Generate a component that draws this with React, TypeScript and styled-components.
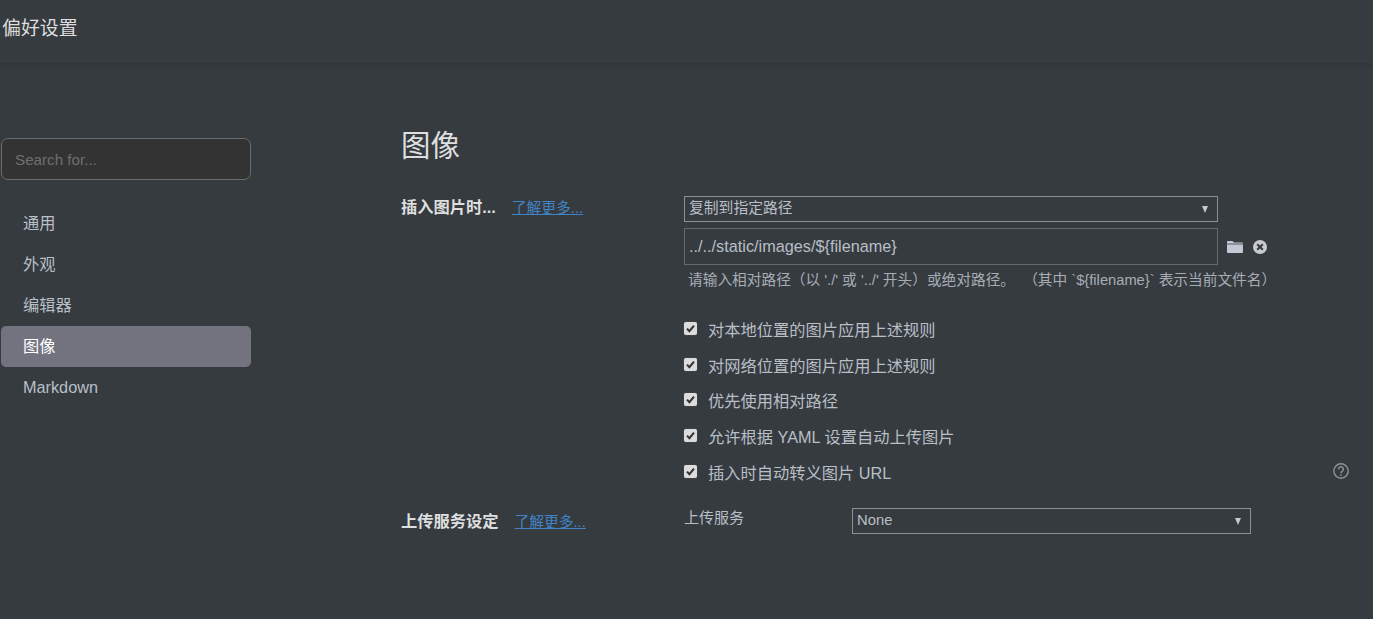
import React from "react";
import styled, { createGlobalStyle } from "styled-components";

const FONT = `"Liberation Sans", "Noto Sans CJK SC", sans-serif`;

const Global = createGlobalStyle`
  html, body { margin: 0; padding: 0; background: #363b40; overflow: hidden; }
  body { font-family: ${FONT}; color: #b8bfc6; }
  * { box-sizing: border-box; }
`;

const Page = styled.div`
  width: 1373px;
  height: 619px;
  background: #363b40;
  overflow: hidden;
`;

const Header = styled.header`
  height: 63px;
  padding: 19px 0 0 2px;
  box-shadow: 0 2px 5px rgba(0, 0, 0, 0.1);
`;

const Title = styled.h3`
  margin: 0;
  font-size: 18.9px;
  line-height: 20px;
  font-weight: 400;
  color: #dedede;
`;

const Body = styled.div`
  display: grid;
  grid-template-columns: 401px 1fr;
`;

const Sidebar = styled.aside`
  padding: 75px 0 0 1px;
  width: 251px;
`;

const Search = styled.input`
  display: block;
  width: 250px;
  height: 42px;
  padding: 0 13px;
  margin-bottom: 23px;
  background: #333333;
  border: 1px solid #6b6b6b;
  border-radius: 7px;
  font: 15.2px ${FONT};
  color: #b8bfc6;
  outline: none;
  &::placeholder { color: #6f6f6f; opacity: 1; }
`;

const NavItem = styled.div<{ $active?: boolean; $latin?: boolean }>`
  height: 41px;
  padding: 0 0 ${(p) => (p.$latin ? 0 : 3)}px 22px;
  display: flex;
  align-items: center;
  border-radius: 5px;
  font-size: 16.25px;
  color: ${(p) => (p.$active ? "#ffffff" : "#b8bfc6")};
  background: ${(p) => (p.$active ? "#73737f" : "transparent")};
`;

const Main = styled.main`
  padding-top: 63px;
`;

const Heading = styled.h1`
  margin: 0 0 29px;
  font-size: 29.5px;
  line-height: 40px;
  font-weight: 400;
  color: #dedede;
`;

const Section = styled.section`
  display: grid;
  grid-template-columns: 283px 1fr;
`;

const LabelRow = styled.div`
  display: flex;
  align-items: baseline;
  gap: 16px;
  height: 24px;
  line-height: 24px;
`;

const SectionLabel = styled.span`
  font-size: 16.25px;
  font-weight: 700;
  color: #dedede;
`;

const More = styled.a`
  font-size: 14.75px;
  color: #4183c4;
  text-decoration: underline;
`;

const Fields = styled.div`
  padding-top: 1px;
`;

const SelectBox = styled.div<{ $width: number }>`
  position: relative;
  width: ${(p) => p.$width}px;
  height: 26px;
  padding-left: 4px;
  border: 1px solid #8f8f8f;
  font-size: 14.8px;
  line-height: 23px;
  color: #b8bfc6;
  &::after {
    content: "";
    position: absolute;
    right: 9px;
    top: 9px;
    border-left: 3.5px solid transparent;
    border-right: 3.5px solid transparent;
    border-top: 7px solid #c4c8d0;
  }
`;

const PathRow = styled.div`
  display: flex;
  align-items: center;
  margin-top: 6px;
  height: 37px;
`;

const PathInput = styled.div`
  width: 534px;
  height: 37px;
  padding-left: 4px;
  border: 1px solid #666a6e;
  font-size: 16.25px;
  line-height: 34px;
  color: #b8bfc6;
`;

const IconSlot = styled.span<{ $left: number }>`
  display: flex;
  margin-left: ${(p) => p.$left}px;
`;

const Hint = styled.div`
  margin: 5px 0 21px 4px;
  font-size: 14.7px;
  line-height: 20px;
  color: #a6adb5;
  white-space: pre;
`;

const CheckRow = styled.div`
  display: flex;
  align-items: center;
  height: 35.75px;
  position: relative;
  font-size: 16.25px;
  color: #b8bfc6;
`;

const Box = styled.span`
  width: 13px;
  height: 13px;
  margin: -1px 11px 0 0;
  background: #dcdcdc;
  border-radius: 2px;
  display: flex;
  align-items: center;
  justify-content: center;
  box-shadow: 0 0 1px #888;
`;

const HelpSlot = styled.span`
  position: absolute;
  left: 649px;
  top: 9px;
  display: flex;
`;

const UploadSection = styled(Section)`
  margin-top: 18px;
`;

const UploadRow = styled.div`
  display: flex;
  align-items: center;
  height: 26px;
`;

const UploadLabel = styled.span`
  width: 168px;
  font-size: 15px;
  padding-bottom: 8px;
  color: #b8bfc6;
`;

const UploadLabelRow = styled(LabelRow)`
  margin-top: 1px;
`;

const Check = () => (
  <svg width="11" height="11" viewBox="0 0 11 11">
    <path d="M2 5.6 L4.4 8.2 L9 2.6" fill="none" stroke="#333" strokeWidth="2" />
  </svg>
);

const Folder = () => (
  <svg width="16" height="13" viewBox="0 0 16 13">
    <path d="M0 2 a1 1 0 0 1 1-1 h4.5 l1.5 1.5 h8 a1 1 0 0 1 1 1 v8.5 a1 1 0 0 1-1 1 h-14 a1 1 0 0 1-1-1 z" fill="#c3c9d4" />
    <path d="M0 4 h16" stroke="#363b40" strokeWidth="0.8" />
  </svg>
);

const Clear = () => (
  <svg width="14" height="14" viewBox="0 0 14 14">
    <circle cx="7" cy="7" r="7" fill="#c9cbce" />
    <path d="M4.2 4.2 L9.8 9.8 M9.8 4.2 L4.2 9.8" stroke="#363b40" strokeWidth="2" />
  </svg>
);

const Help = () => (
  <svg width="16" height="16" viewBox="0 0 16 16">
    <circle cx="8" cy="8" r="7.2" fill="none" stroke="#8f9397" strokeWidth="1.4" />
    <path d="M5.6 6.2 a2.4 2.4 0 1 1 3.8 2 c-.9.6-1.4 1-1.4 2" fill="none" stroke="#8f9397" strokeWidth="1.4" />
    <circle cx="8" cy="12.1" r="0.9" fill="#8f9397" />
  </svg>
);

const nav = ["通用", "外观", "编辑器", "图像", "Markdown"];
const checks = [
  "对本地位置的图片应用上述规则",
  "对网络位置的图片应用上述规则",
  "优先使用相对路径",
  "允许根据 YAML 设置自动上传图片",
  "插入时自动转义图片 URL",
];

export default function App() {
  return (
    <Page>
      <Global />
      <Header>
        <Title>偏好设置</Title>
      </Header>
      <Body>
        <Sidebar>
          <Search placeholder="Search for..." readOnly />
          {nav.map((n) => (
            <NavItem key={n} $active={n === "图像"} $latin={n === "Markdown"}>
              {n}
            </NavItem>
          ))}
        </Sidebar>
        <Main>
          <Heading>图像</Heading>
          <Section>
            <LabelRow>
              <SectionLabel>插入图片时...</SectionLabel>
              <More>了解更多...</More>
            </LabelRow>
            <Fields>
              <SelectBox $width={534}>复制到指定路径</SelectBox>
              <PathRow>
                <PathInput>{"../../static/images/${filename}"}</PathInput>
                <IconSlot $left={9}>
                  <Folder />
                </IconSlot>
                <IconSlot $left={10}>
                  <Clear />
                </IconSlot>
              </PathRow>
              <Hint>{"请输入相对路径（以 './' 或 '../' 开头）或绝对路径。  （其中 `${filename}` 表示当前文件名）"}</Hint>
              {checks.map((c, i) => (
                <CheckRow key={c}>
                  <Box>
                    <Check />
                  </Box>
                  {c}
                  {i === 4 && (
                    <HelpSlot>
                      <Help />
                    </HelpSlot>
                  )}
                </CheckRow>
              ))}
            </Fields>
          </Section>
          <UploadSection>
            <UploadLabelRow>
              <SectionLabel>上传服务设定</SectionLabel>
              <More>了解更多...</More>
            </UploadLabelRow>
            <UploadRow>
              <UploadLabel>上传服务</UploadLabel>
              <SelectBox $width={399}>None</SelectBox>
            </UploadRow>
          </UploadSection>
        </Main>
      </Body>
    </Page>
  );
}
